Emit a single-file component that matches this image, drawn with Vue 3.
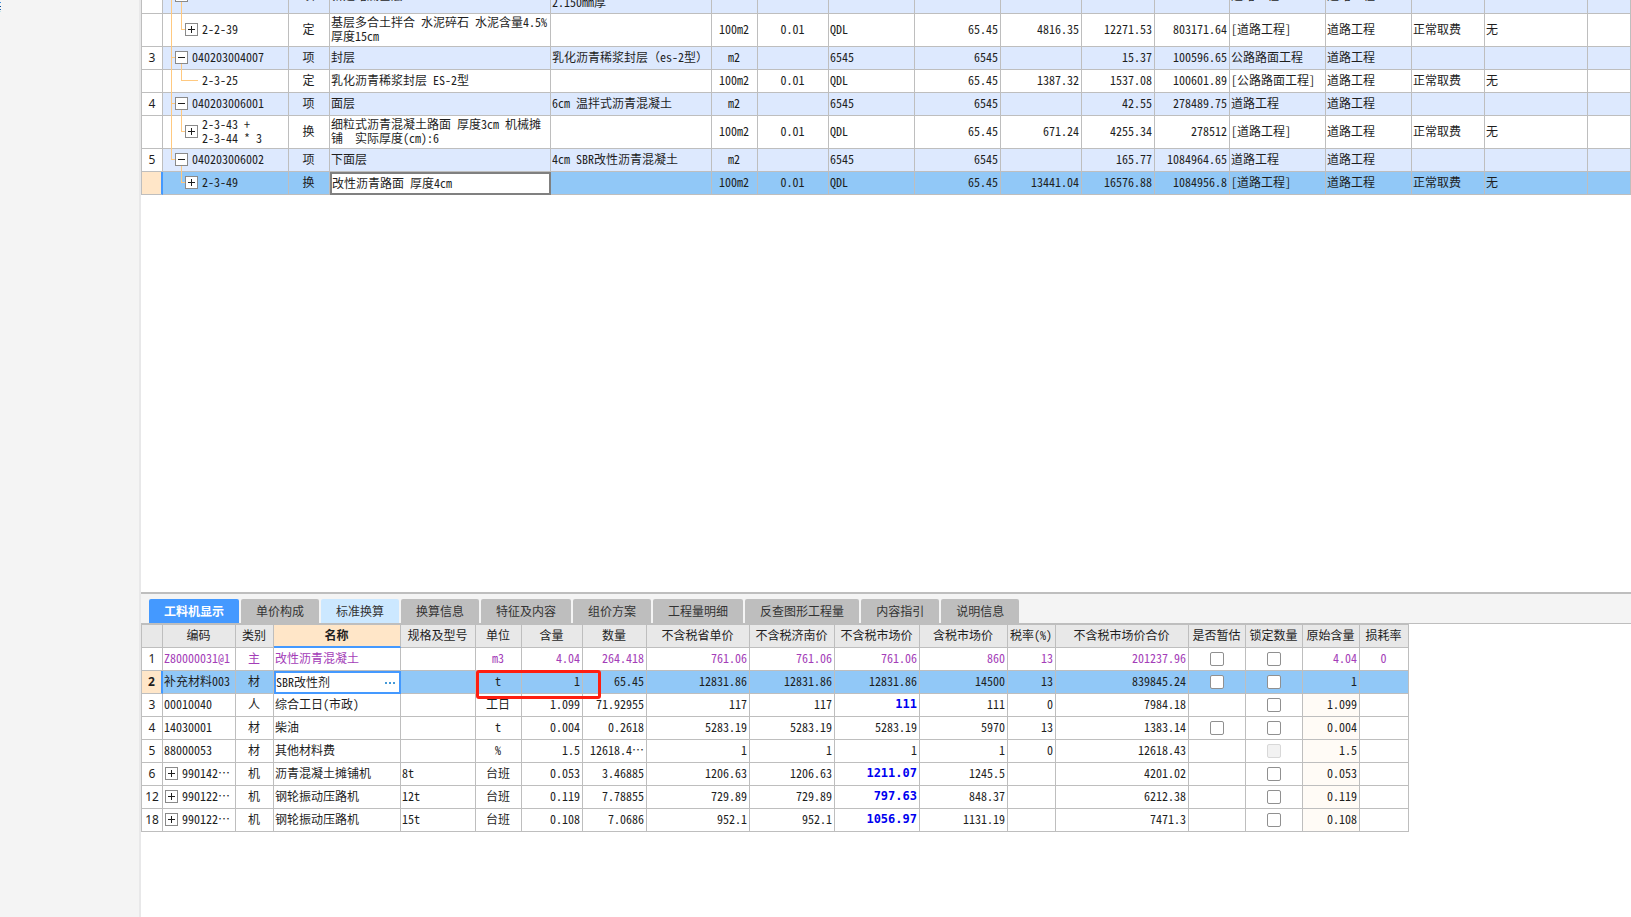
<script setup>
import { ref } from 'vue'

const budgetCols = [21, 126, 41, 221, 161, 46, 71, 86, 86, 81, 73, 75, 96, 86, 73, 103, null]
const budgetAlign = ['c', 'l', 'l', 'c', 'c', 'l', 'r', 'r', 'r', 'r', 'l', 'l', 'l', 'l', 'l']

const budgetRows = ref([
  { no: '2', level: 1, open: true, code: '040203004006', cells: ['项', '新建路底基层', '1.级配碎石\n2.150mm厚', '', '', '', '', '', '', '', '道路工程', '道路工程', '', '', ''], tall: true },
  { no: '', level: 2, open: false, code: '2-2-39', cells: ['定', '基层多合土拌合 水泥碎石 水泥含量4.5%\n厚度15cm', '', '100m2', '0.01', 'QDL', '65.45', '4816.35', '12271.53', '803171.64', '[道路工程]', '道路工程', '正常取费', '无', ''], tall: true },
  { no: '3', level: 1, open: true, code: '040203004007', cells: ['项', '封层', '乳化沥青稀浆封层（es-2型）', 'm2', '', '6545', '6545', '', '15.37', '100596.65', '公路路面工程', '道路工程', '', '', ''] },
  { no: '', level: 2, leaf: true, code: '2-3-25', cells: ['定', '乳化沥青稀浆封层 ES-2型', '', '100m2', '0.01', 'QDL', '65.45', '1387.32', '1537.08', '100601.89', '[公路路面工程]', '道路工程', '正常取费', '无', ''] },
  { no: '4', level: 1, open: true, code: '040203006001', cells: ['项', '面层', '6cm 温拌式沥青混凝土', 'm2', '', '6545', '6545', '', '42.55', '278489.75', '道路工程', '道路工程', '', '', ''] },
  { no: '', level: 2, open: false, code: '2-3-43 +\n2-3-44 * 3', cells: ['换', '细粒式沥青混凝土路面 厚度3cm 机械摊\n铺  实际厚度(cm):6', '', '100m2', '0.01', 'QDL', '65.45', '671.24', '4255.34', '278512', '[道路工程]', '道路工程', '正常取费', '无', ''], tall: true },
  { no: '5', level: 1, open: true, last: true, code: '040203006002', cells: ['项', '下面层', '4cm SBR改性沥青混凝土', 'm2', '', '6545', '6545', '', '165.77', '1084964.65', '道路工程', '道路工程', '', '', ''] },
  { no: '', level: 2, open: false, last: true, selected: true, code: '2-3-49', cells: ['换', '改性沥青路面 厚度4cm', '', '100m2', '0.01', 'QDL', '65.45', '13441.04', '16576.88', '1084956.8', '[道路工程]', '道路工程', '正常取费', '无', ''] }
])

const tabs = ['工料机显示', '单价构成', '标准换算', '换算信息', '特征及内容', '组价方案', '工程量明细', '反查图形工程量', '内容指引', '说明信息']
const activeTab = ref(0)

const detailCols = [21, 73, 38, 127, 75, 46, 61, 64, 103, 85, 85, 88, 48, 133, 57, 57, 57, 49]
const detailWidth = detailCols.reduce((sum, w) => sum + w, 1)
const detailHead = ['编码', '类别', '名称', '规格及型号', '单位', '含量', '数量', '不含税省单价', '不含税济南价', '不含税市场价', '含税市场价', '税率(%)', '不含税市场价合价', '是否暂估', '锁定数量', '原始含量', '损耗率']

const detailRows = ref([
  { no: '1', main: true, code: 'Z80000031@1', kind: '主', name: '改性沥青混凝土', spec: '', unit: 'm3', nums: ['4.04', '264.418', '761.06', '761.06', '761.06', '860', '13', '201237.96'], est: true, lock: true, origin: '4.04', loss: '0' },
  { no: '2', selected: true, code: '补充材料003', kind: '材', name: 'SBR改性剂', spec: '', unit: 't', nums: ['1', '65.45', '12831.86', '12831.86', '12831.86', '14500', '13', '839845.24'], est: true, lock: true, origin: '1', loss: '' },
  { no: '3', code: '00010040', kind: '人', name: '综合工日(市政)', spec: '', unit: '工日', nums: ['1.099', '71.92955', '117', '117', '111', '111', '0', '7984.18'], changed: true, lock: true, origin: '1.099', loss: '' },
  { no: '4', code: '14030001', kind: '材', name: '柴油', spec: '', unit: 't', nums: ['0.004', '0.2618', '5283.19', '5283.19', '5283.19', '5970', '13', '1383.14'], est: true, lock: true, origin: '0.004', loss: '' },
  { no: '5', code: '88000053', kind: '材', name: '其他材料费', spec: '', unit: '%', nums: ['1.5', '12618.4…', '1', '1', '1', '1', '0', '12618.43'], lock: true, locked: true, origin: '1.5', loss: '' },
  { no: '6', group: true, code: '990142…', kind: '机', name: '沥青混凝土摊铺机', spec: '8t', unit: '台班', nums: ['0.053', '3.46885', '1206.63', '1206.63', '1211.07', '1245.5', '', '4201.02'], changed: true, lock: true, origin: '0.053', loss: '' },
  { no: '12', group: true, code: '990122…', kind: '机', name: '钢轮振动压路机', spec: '12t', unit: '台班', nums: ['0.119', '7.78855', '729.89', '729.89', '797.63', '848.37', '', '6212.38'], changed: true, lock: true, origin: '0.119', loss: '' },
  { no: '18', group: true, code: '990122…', kind: '机', name: '钢轮振动压路机', spec: '15t', unit: '台班', nums: ['0.108', '7.0686', '952.1', '952.1', '1056.97', '1131.19', '', '7471.3'], changed: true, lock: true, origin: '0.108', loss: '' }
])
</script>

<template>
  <div class="app">
    <aside class="side">
      <svg class="side-mark" width="1" height="14" viewBox="0 0 1 14">
        <rect y="2" width="1" height="1" fill="#3f8fe0" />
        <rect y="6" width="1" height="1" fill="#0b4c94" />
        <rect y="9" width="1" height="1" fill="#1f66b4" />
        <rect y="11" width="1" height="1" fill="#bfe4ea" />
      </svg>
    </aside>
    <main class="work">
      <section class="budget">
        <table class="grid budget-grid">
          <colgroup>
            <col v-for="(w, i) in budgetCols" :key="i" :style="w ? { width: w + 'px' } : null" />
          </colgroup>
          <tbody>
            <tr v-for="(r, ri) in budgetRows" :key="ri" :class="{ item: r.level === 1, tall: r.tall, selected: r.selected }">
              <td class="num">{{ r.no }}</td>
              <td class="tree" :class="['lv' + r.level, { last: r.last, leaf: r.leaf }]">
                <span class="trunk"></span>
                <span class="branch"></span>
                <span v-if="r.level === 1" class="stem"></span>
                <div class="tree-row">
                  <button v-if="!r.leaf" class="exp" type="button" :aria-label="r.open ? '折叠' : '展开'">
                    <svg width="13" height="13" viewBox="0 0 13 13"><path :d="r.open ? 'M3 6.5H10' : 'M3 6.5H10M6.5 3V10'" /></svg>
                  </button>
                  <span v-else class="exp-gap"></span>
                  <span class="code">{{ r.code }}</span>
                </div>
              </td>
              <td v-for="(c, ci) in r.cells" :key="ci" :class="[budgetAlign[ci], { focus: r.selected && ci === 1 }]">{{ c }}</td>
            </tr>
          </tbody>
        </table>
      </section>

      <section class="detail">
        <nav class="tabs">
          <button v-for="(t, i) in tabs" :key="t" type="button" class="tab" :class="{ active: i === activeTab, hover: i === 2 }" @click="activeTab = i">{{ t }}</button>
        </nav>
        <div class="detail-body">
          <table class="grid detail-grid" :style="{ width: detailWidth + 'px' }">
            <colgroup>
              <col v-for="(w, i) in detailCols" :key="i" :style="{ width: w + 'px' }" />
            </colgroup>
            <thead>
              <tr>
                <th></th>
                <th v-for="h in detailHead" :key="h" :class="{ current: h === '名称' }">{{ h }}</th>
              </tr>
            </thead>
            <tbody>
              <tr v-for="r in detailRows" :key="r.no" :class="{ main: r.main, selected: r.selected }">
                <td class="num">{{ r.no }}</td>
                <td class="l">
                  <div v-if="r.group" class="group-row">
                    <button class="exp" type="button" aria-label="展开">
                      <svg width="13" height="13" viewBox="0 0 13 13"><path d="M3 6.5H10M6.5 3V10" /></svg>
                    </button>
                    <span>{{ r.code }}</span>
                  </div>
                  <template v-else>{{ r.code }}</template>
                </td>
                <td class="c">{{ r.kind }}</td>
                <td v-if="r.selected" class="edit">
                  <div class="edit-row">
                    <input v-model="r.name" type="text" aria-label="名称" />
                    <button type="button" class="more" aria-label="选择"><i></i><i></i><i></i></button>
                  </div>
                </td>
                <td v-else class="l">{{ r.name }}</td>
                <td class="l">{{ r.spec }}</td>
                <td class="c">{{ r.unit }}</td>
                <td v-for="(n, ni) in r.nums" :key="ni" class="r" :class="{ changed: r.changed && ni === 4 }">{{ n }}</td>
                <td class="check"><input v-if="r.est" type="checkbox" :aria-label="'是否暂估 ' + r.no" /></td>
                <td class="check"><input v-if="r.lock" type="checkbox" :disabled="r.locked" :aria-label="'锁定数量 ' + r.no" /></td>
                <td class="r origin">{{ r.origin }}</td>
                <td class="c">{{ r.loss }}</td>
              </tr>
            </tbody>
          </table>
          <div class="mark"></div>
        </div>
      </section>
    </main>
  </div>
</template>

<style>
body { background: #fff; }
</style>

<style scoped>
.app {
  display: flex;
  height: 100vh;
  overflow: hidden;
  background: #fff;
  color: #1e1e1e;
  font-family: "Noto Sans Mono CJK SC", "Noto Sans CJK SC", monospace;
  font-size: 12px;
  line-height: 14px;
}
button, input { font: inherit; color: inherit; }
.side {
  flex: none;
  width: 139px;
  background: #f4f4f4;
  border-right: 2px solid #e8e8e9;
}
.side-mark { display: block; }
.work {
  flex: 1;
  min-width: 0;
  display: flex;
  flex-direction: column;
}
.budget { flex: 1; min-height: 0; overflow: hidden; }
/* the list is scrolled part-way through its first visible row */
.budget-grid { width: 100%; margin-top: -21px; }
.grid {
  table-layout: fixed;
  border-collapse: separate;
  border-spacing: 0;
  border-left: 1px solid #bebebe;
}
.grid td, .grid th {
  box-sizing: border-box;
  height: 23px;
  padding: 0 2px 2px 1px;
  border-right: 1px solid #bebebe;
  border-bottom: 1px solid #bebebe;
  vertical-align: middle;
  white-space: pre;
  overflow: hidden;
  font-weight: normal;
}
.grid .tall td { height: 33px; }
.budget-grid tr:first-child td { height: 35px; }
.grid .item td { background: #dde9fe; }
.grid .c, .grid th { text-align: center; padding: 0 1px 2px 0; }
.grid .l { text-align: left; }
.grid .r { text-align: right; }
.grid td.check { padding: 0; }
.grid td.num {
  padding: 0;
  text-align: center;
  background: #fff;
  font-family: "Noto Sans", sans-serif;
}
.grid .selected td { background: #91c8f7; }
.grid .selected td.num {
  background: #ffe6c8;
  border-right: 2px solid #4499ff;
}
.grid .selected td.focus {
  padding: 0 0 1px;
  background: #fff;
  border: 2px solid #808080;
}
.grid td.tree { position: relative; padding: 0 0 2px; overflow: visible; }
.tree-row { display: flex; align-items: center; gap: 4px; }
.lv1 .tree-row { padding-left: 12px; }
.lv2 .tree-row { padding-left: 22px; }
.exp {
  position: relative;
  flex: none;
  width: 13px;
  height: 13px;
  padding: 0;
  border: 0;
  background: #fff;
  box-shadow: inset 0 0 0 1px #8a8a8a;
}
.exp svg { display: block; }
.exp svg path { fill: none; stroke: #1e1e1e; stroke-width: 1; }
.exp-gap { width: 13px; height: 13px; }
.trunk, .branch, .stem { position: absolute; background: #ffc980; }
.trunk { left: 8px; top: 0; bottom: -1px; width: 1px; }
.lv1.last .trunk { bottom: 50%; }
.lv2.last .trunk { display: none; }
.lv1 .branch { left: 8px; top: calc(50% - 1px); width: 4px; height: 1px; }
.lv1 .stem { left: 18px; top: 50%; bottom: -1px; width: 1px; }
.lv2 .branch {
  left: 18px;
  top: 0;
  width: 4px;
  height: 50%;
  box-sizing: border-box;
  background: none;
  border-left: 1px solid #ffc980;
  border-bottom: 1px solid #ffc980;
}
.lv2.leaf .branch { width: 17px; }

.detail { flex: none; height: 323px; border-top: 2px solid #bebebe; }
.tabs {
  display: flex;
  gap: 2px;
  height: 24px;
  padding: 5px 8px 0;
  background: #f4f4f4;
  border-bottom: 1px solid #bebebe;
}
.tab {
  padding: 0 15px;
  border: 0;
  border-radius: 2px 2px 0 0;
  background: #bebebe;
  color: #333;
  font-family: "Noto Sans CJK SC", sans-serif;
}
.tab.hover { background: #cce8ff; }
.tab.active { background: #4499ff; color: #fff; font-weight: bold; }
.detail-body { position: relative; }
.detail-grid { border-top: 1px solid #bebebe; }
.grid th { background: #e8e8e8; }
.grid th.current {
  background: #ffe6c8;
  border-bottom: 2px solid #4499ff;
  font-weight: bold;
}
.grid .main td { color: #a43db8; }
.grid .main td.num { color: #1e1e1e; }
.detail-grid .selected td.num { font-weight: bold; }
.group-row { display: flex; align-items: center; gap: 4px; padding-left: 1px; }
.grid td.changed {
  color: #0000f0;
  font-family: "DejaVu Sans Mono", monospace;
  font-weight: bold;
}
.grid td.origin { background: #fffbf6; }
.grid .main td.origin { background: #fff; }
.grid .selected td.origin { background: #91c8f7; }
.grid .selected td.edit {
  padding: 0;
  background: #fff;
  border: 2px solid #4499ff;
}
.edit-row { display: flex; align-items: center; }
.edit input {
  flex: 1;
  min-width: 0;
  height: 17px;
  padding: 0 0 2px;
  box-sizing: border-box;
  border: 0;
  outline: 0;
  background: none;
}
.more {
  display: flex;
  gap: 2px;
  padding: 4px;
  border: 0;
  background: none;
}
.more i { width: 2px; height: 2px; background: #4499d8; }
input[type="checkbox"] {
  appearance: none;
  display: block;
  box-sizing: border-box;
  width: 14px;
  height: 14px;
  margin: 0 auto;
  border: 1px solid #909090;
  border-radius: 2px;
  background: #fff;
}
input[type="checkbox"]:disabled { border-color: #d8d8d8; background: #f2f2f2; }
.mark {
  position: absolute;
  left: 335px;
  top: 46px;
  width: 119px;
  height: 23px;
  border: 3px solid #ff1e10;
  border-radius: 3px;
}
</style>
